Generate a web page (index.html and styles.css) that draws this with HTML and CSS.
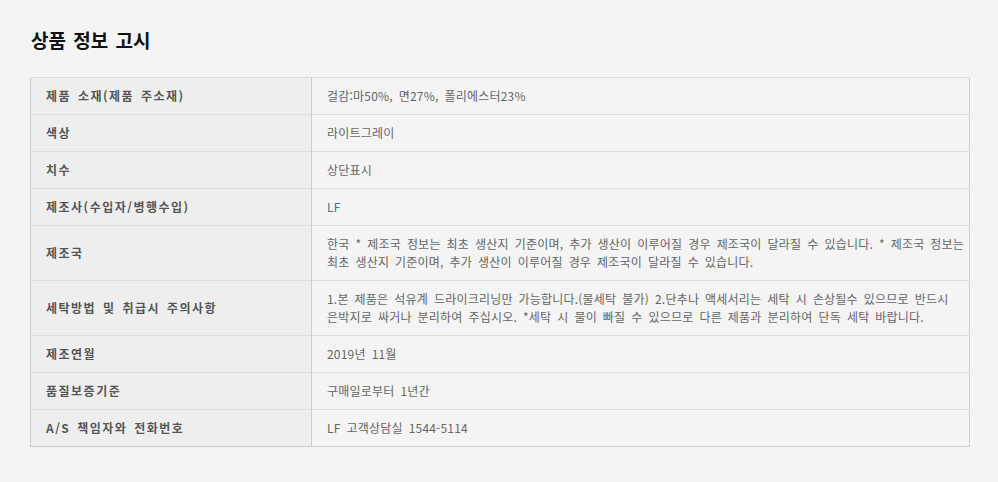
FILE: index.html
```html
<!DOCTYPE html>
<html lang="ko">
<head>
<meta charset="utf-8">
<title>상품 정보 고시</title>
<link rel="stylesheet" href="styles.css">
</head>
<body>
<div class="page">
  <h2 class="title">상품 정보 고시</h2>
  <table class="info">
    <colgroup>
      <col class="col-label">
      <col>
    </colgroup>
    <tbody>
      <tr><th>제품 소재(제품 주소재)</th><td>걸감:마50%, 면27%, 폴리에스터23%</td></tr>
      <tr><th>색상</th><td>라이트그레이</td></tr>
      <tr><th>치수</th><td>상단표시</td></tr>
      <tr><th>제조사(수입자/병행수입)</th><td>LF</td></tr>
      <tr><th>제조국</th><td>한국 * 제조국 정보는 최초 생산지 기준이며, 추가 생산이 이루어질 경우 제조국이 달라질 수 있습니다. * 제조국 정보는<br>최초 생산지 기준이며, 추가 생산이 이루어질 경우 제조국이 달라질 수 있습니다.</td></tr>
      <tr><th>세탁방법 및 취급시 주의사항</th><td>1.본 제품은 석유계 드라이크리닝만 가능합니다.(물세탁 불가) 2.단추나 액세서리는 세탁 시 손상될수 있으므로 반드시<br>은박지로 싸거나 분리하여 주십시오. *세탁 시 물이 빠질 수 있으므로 다른 제품과 분리하여 단독 세탁 바랍니다.</td></tr>
      <tr><th>제조연월</th><td>2019년 11월</td></tr>
      <tr><th>품질보증기준</th><td>구매일로부터 1년간</td></tr>
      <tr><th>A/S 책임자와 전화번호</th><td>LF 고객상담실 1544-5114</td></tr>
    </tbody>
  </table>
</div>
</body>
</html>
```

FILE: styles.css
```css
html, body {
  margin: 0;
  padding: 0;
  background: #f4f4f4;
}
body {
  font-family: "Noto Sans CJK KR", "Noto Sans", sans-serif;
}
.page {
  padding: 26px 29px 0 30px;
}
.title {
  margin: 0 0 23px 1px;
  font-size: 19px;
  line-height: 28px;
  font-weight: 700;
  color: #111;
  word-spacing: 2px;
}
.info {
  width: 940px;
  table-layout: fixed;
  border-collapse: collapse;
  border: 1px solid #cccccc;
  font-size: 12px;
  line-height: 18px;
}
.col-label {
  width: 281px;
}
.info th,
.info td {
  padding: 9px 4px 9px 15px;
  border-top: 1px solid #dddddd;
  text-align: left;
  vertical-align: middle;
}
.info th {
  background: #eeeeee;
  color: #555555;
  font-weight: 700;
  letter-spacing: 1.5px;
  word-spacing: 2px;
  border-right: 1px solid #cccccc;
}
.info td {
  color: #666666;
  font-weight: 400;
  letter-spacing: 0.2px;
  word-spacing: 2.4px;
  white-space: nowrap;
}
```
